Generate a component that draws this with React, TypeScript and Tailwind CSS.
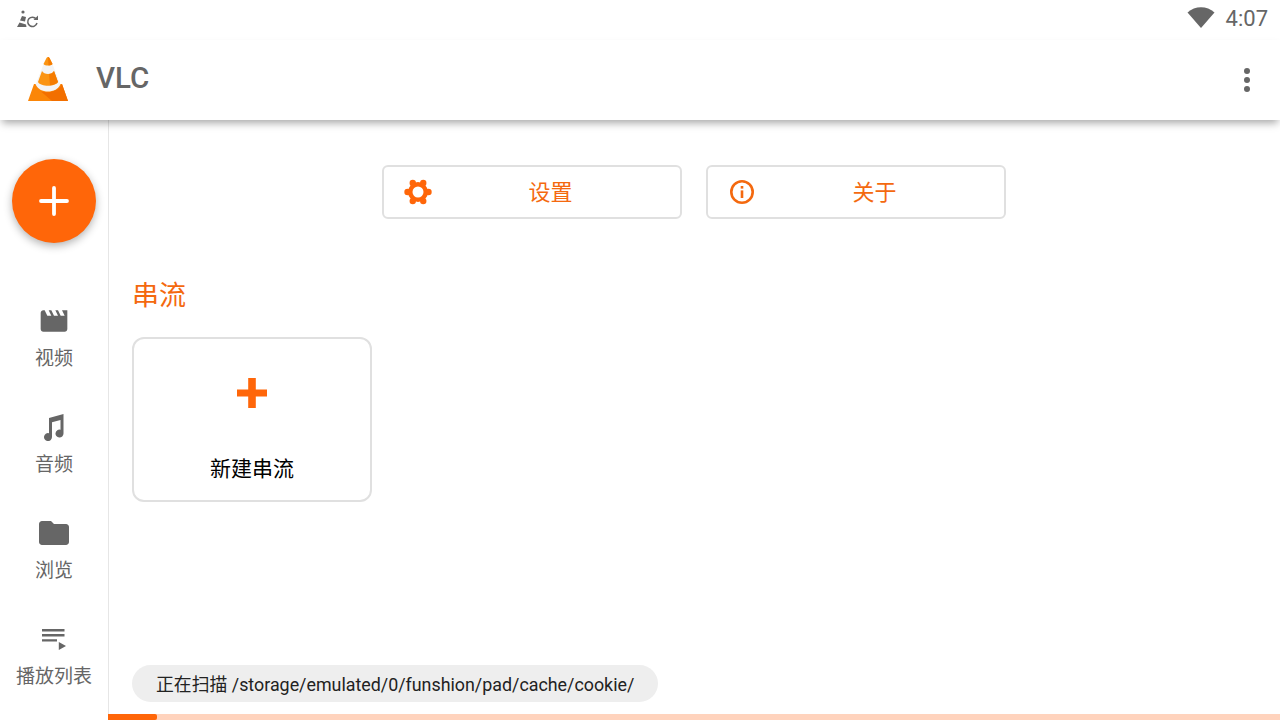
const FONT = "font-['Roboto','Noto_Sans_CJK_SC',sans-serif]";

function VlcCone() {
  return (
    <svg className="mb-[3px]" width="42" height="46" viewBox="0 0 42 46">
      {/* white body */}
      <path d="M17 7 L8.5 29 C12 38.5 30 38.5 33.5 29 L25 7 Z" fill="#f4f4f4" />
      {/* base */}
      <path d="M7 28 L1 45 H41 L35 28 H33.5 C30 38 12 38 8.5 28 Z" fill="#fb8608" />
      <path d="M14 35.5 C20 37 28 36.5 33 31 L35 28 L41 45 H25 Z" fill="#f26f00" />
      {/* middle band */}
      <path d="M15 15 C17 19 25 19 27 15 L31 26 C28 31 14 31 11 26 Z" fill="#fb9412" />
      <path d="M22 18 C24 18 26 17 27 15 L31 26 C29.5 28 26 29 23 29.3 Z" fill="#f57c00" />
      {/* tip */}
      <path d="M19.5 2 C20.3 0.8 21.7 0.8 22.5 2 L25.5 8 C24 10 18 10 16.5 8 Z" fill="#fb9412" />
      <path d="M21 1.1 C21.6 1.1 22.1 1.4 22.5 2 L25.5 8 C24.6 9 23 9.4 21.5 9.5 Z" fill="#f57c00" />
    </svg>
  );
}

function MediaScanIcon() {
  return (
    <svg width="24" height="20" viewBox="0 0 24 20" className="mb-[2px] text-[#666]">
      <path d="M1 18 L3.5 13.5 L10 15.5 L10.5 18 Z M4 11.5 L6 7 L10 8 L9 12.5 Z" fill="currentColor" />
      <circle cx="7" cy="3" r="1.6" fill="currentColor" />
      <path d="M20.2 10 A4.7 4.7 0 1 0 21 14" fill="none" stroke="currentColor" strokeWidth="1.5" />
      <path d="M22 6.5 V11 H17.5 Z" fill="currentColor" />
    </svg>
  );
}

function NavItem({ label, icon }: { label: string; icon: React.ReactNode }) {
  return (
    <div className="flex h-[106px] flex-col items-center">
      <div className="flex h-8 w-8 items-center justify-center">{icon}</div>
      <span className="mt-[9px] text-[19px] leading-[26px] text-[#666]">{label}</span>
    </div>
  );
}

function OutlineButton({ label, icon }: { label: string; icon: React.ReactNode }) {
  return (
    <button className="flex h-[54px] w-[300px] items-center rounded-[6px] border-2 border-[#e0e0e0] bg-white pl-5 pr-[11px]">
      {icon}
      <span className="flex-1 pt-[2px] text-center text-[22px] leading-none text-[#f4690f]">{label}</span>
    </button>
  );
}

const GEAR_LOBES = [0, 60, 120, 180, 240, 300];

export default function App() {
  return (
    <div className={`flex h-[720px] w-[1280px] flex-col overflow-hidden bg-white ${FONT}`}>
      {/* status bar */}
      <div className="flex h-10 shrink-0 items-center justify-between pl-4 pr-3">
        <MediaScanIcon />
        <div className="flex items-center gap-[11px]">
          <svg className="mb-[5px]" width="28" height="21" viewBox="0 0 28 21">
            <path d="M0.5 5.5 C8 -1.5 20 -1.5 27.5 5.5 L14 21 Z" fill="#666" />
          </svg>
          <span className="pb-[2px] text-[22px] leading-none text-[#666]">4:07</span>
        </div>
      </div>

      {/* app bar */}
      <header className="relative z-10 flex h-20 shrink-0 items-center justify-between bg-white pl-[27px] pr-[21px] shadow-[0_5px_8px_-2px_rgba(0,0,0,0.35)]">
        <div className="flex items-center gap-[27px]">
          <VlcCone />
          <span className="pb-[3px] text-[29.5px] font-medium leading-none text-[#666]">VLC</span>
        </div>
        <svg width="24" height="32" viewBox="0 0 24 32" fill="#666">
          <circle cx="12" cy="7" r="3" />
          <circle cx="12" cy="16" r="3" />
          <circle cx="12" cy="25" r="3" />
        </svg>
      </header>

      <div className="flex min-h-0 flex-1">
        {/* nav rail */}
        <nav className="flex w-[109px] shrink-0 flex-col border-r border-[#e6e6e6]">
          <div className="ml-3 mt-[39px] flex h-[84px] w-[84px] shrink-0 items-center justify-center rounded-full bg-[#ff6609] shadow-[0_3px_8px_rgba(0,0,0,0.3)]">
            <svg width="32" height="32" viewBox="0 0 32 32">
              <path d="M16 3 V29 M3 16 H29" stroke="#fff" strokeWidth="3.8" strokeLinecap="round" />
            </svg>
          </div>
          <div className="mt-[62px] flex flex-col">
            <NavItem
              label="视频"
              icon={
                <svg width="32" height="32" viewBox="0 0 24 24" fill="#666">
                  <path d="M18 4l2 4h-3l-2-4h-2l2 4h-3l-2-4H8l2 4H7L5 4H4c-1.1 0-1.99.9-1.99 2L2 18c0 1.1.9 2 2 2h16c1.1 0 2-.9 2-2V4h-4z" />
                </svg>
              }
            />
            <NavItem
              label="音频"
              icon={
                <svg width="20" height="28" viewBox="0 0 20 28" fill="#666">
                  <path d="M5 5 L19.5 1 V20.5 A4 4 0 1 1 16.5 16.7 V7 L8 9.3 V24 A4 4 0 1 1 5 20.2 Z" />
                </svg>
              }
            />
            <NavItem
              label="浏览"
              icon={
                <svg className="shrink-0" width="36" height="36" viewBox="0 0 24 24" fill="#666">
                  <path d="M10 4H4c-1.1 0-1.99.9-1.99 2L2 18c0 1.1.9 2 2 2h16c1.1 0 2-.9 2-2V8c0-1.1-.9-2-2-2h-8l-2-2z" />
                </svg>
              }
            />
            <NavItem
              label="播放列表"
              icon={
                <svg width="24" height="21" viewBox="0 0 24 21" fill="#666">
                  <path d="M0 0H22.5V2.4H0Z M0 5H22.5V7.4H0Z M0 10.2H15V12.4H0Z M16.8 13V21L24 17Z" />
                </svg>
              }
            />
          </div>
        </nav>

        {/* content */}
        <main className="flex min-w-0 flex-1 flex-col">
          <div className="flex min-h-0 flex-1 flex-col pl-[23px]">
            <div className="ml-[250px] mt-[45px] flex gap-6">
              <OutlineButton
                label="设置"
                icon={
                  <svg width="28" height="28" viewBox="0 0 28 28">
                    <circle cx="14" cy="14" r="10" fill="#ff6609" />
                    {GEAR_LOBES.map((deg) => (
                      <circle
                        key={deg}
                        cx={14 + 10.5 * Math.cos((deg * Math.PI) / 180)}
                        cy={14 + 10.5 * Math.sin((deg * Math.PI) / 180)}
                        r="3.2"
                        fill="#ff6609"
                      />
                    ))}
                    <circle cx="14" cy="14" r="5.5" fill="#fff" />
                  </svg>
                }
              />
              <OutlineButton
                label="关于"
                icon={
                  <svg width="28" height="28" viewBox="0 0 28 28">
                    <circle cx="14" cy="14" r="10.7" fill="none" stroke="#f4690f" strokeWidth="2.6" />
                    <rect x="12.7" y="8" width="2.6" height="2.6" fill="#f4690f" />
                    <rect x="12.7" y="12.4" width="2.6" height="7.6" fill="#f4690f" />
                  </svg>
                }
              />
            </div>
            <h2 className="mt-[58px] text-[27px] font-normal leading-[38px] text-[#f4690f]">串流</h2>
            <div className="mt-[22px] flex h-[165px] w-[240px] flex-col items-center rounded-[12px] border-2 border-[#e0e0e0] bg-white">
              <svg className="mt-[38px]" width="32" height="32" viewBox="0 0 32 32">
                <path d="M12.2 1 H19.8 V12.5 H31 V19.5 H19.8 V31 H12.2 V19.5 H1 V12.5 H12.2 Z" fill="#ff6609" />
              </svg>
              <span className="mt-[45px] text-[21px] leading-[30px] text-black">新建串流</span>
            </div>
            <div className="mb-3 mt-auto flex h-[37px] w-[526px] items-center rounded-full bg-[#eeeeee] pl-6 pt-[3px] text-[17.85px] text-[#222]">
              正在扫描 /storage/emulated/0/funshion/pad/cache/cookie/
            </div>
          </div>
          {/* scan progress */}
          <div className="-ml-px h-[6px] bg-[#ffd3bd]">
            <div className="h-full w-[49px] rounded-r-[2px] bg-[#ff6609]" />
          </div>
        </main>
      </div>
    </div>
  );
}
